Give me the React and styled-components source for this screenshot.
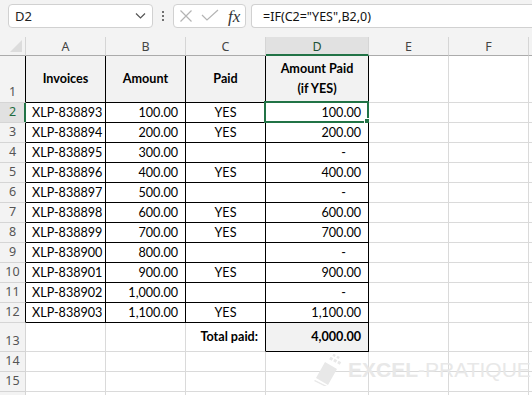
import React from "react";
import styled, { createGlobalStyle } from "styled-components";

const Global = createGlobalStyle`
  html, body { margin: 0; padding: 0; background: #ffffff; overflow: hidden; }
  #root { width: 532px; height: 395px; overflow: hidden; }
`;

const GREEN = "#217346";
const GRID = "#dadada";
const BLACK = "#000000";
const CELL_FONT = `"Lato", "Liberation Sans", sans-serif`;
const UI_FONT = `"Noto Sans", "Open Sans", sans-serif`;

const Page = styled.div`
  position: relative;
  width: 532px;
  height: 395px;
  overflow: hidden;
  background: #ffffff;
`;

const TopBar = styled.div`
  height: 37px;
  background: #f3f3f3;
  display: flex;
  align-items: flex-start;
  padding: 4px 0 0 8px;
  box-sizing: border-box;
`;

const Box = styled.div`
  height: 24px;
  box-sizing: border-box;
  background: #ffffff;
  border: 1px solid #d1d1d1;
  border-radius: 4px;
  display: flex;
  align-items: center;
`;

const NameBox = styled(Box)`
  width: 145px;
  padding: 0 5px 0 6px;
  justify-content: space-between;
  font-family: ${UI_FONT};
  font-size: 13px;
  color: #222;
`;

const Dots = styled.div`
  width: 20px;
  height: 24px;
  display: flex;
  flex-direction: column;
  align-items: center;
  justify-content: center;
  gap: 2px;
  span {
    width: 2px;
    height: 2px;
    background: #444;
    border-radius: 1px;
  }
`;

const FuncBox = styled(Box)`
  width: 73px;
  padding: 0 4px 0 5px;
  gap: 8px;
`;

const Fx = styled.span`
  font-family: "Liberation Serif", serif;
  font-style: italic;
  font-size: 17px;
  color: #333;
  margin-left: 1px;
  line-height: 1;
`;

const FormulaBox = styled(Box)`
  flex: 1;
  margin-left: 5px;
  border-right: none;
  border-radius: 4px 0 0 4px;
  padding-left: 11px;
  font-family: ${UI_FONT};
  font-size: 12.5px;
  color: #111;
  white-space: nowrap;
`;

const Sheet = styled.div`
  display: grid;
  grid-template-columns: 26px 80px 80px 80px 103px 80px 80px 1fr;
  grid-template-rows: 19px 47px repeat(11, 20px) 29px 20px 20px 20px;
`;

const Corner = styled.div`
  background: #f3f3f3;
  border-right: 1px solid #d5d5d5;
  border-bottom: 1px solid #ababab;
  position: relative;
  &::after {
    content: "";
    position: absolute;
    right: 3px;
    bottom: 3px;
    width: 0;
    height: 0;
    border-left: 12px solid transparent;
    border-bottom: 12px solid #dcdcdc;
  }
`;

const ColHead = styled.div`
  background: ${(p) => (p.$selected ? "#e1e1e1" : "#f3f3f3")};
  border-right: 1px solid #d5d5d5;
  border-bottom: ${(p) => (p.$selected ? `2px solid ${GREEN}` : "1px solid #ababab")};
  display: flex;
  align-items: center;
  justify-content: center;
  font-family: ${UI_FONT};
  font-size: 12.5px;
  color: ${(p) => (p.$selected ? "#1d5236" : "#444")};
  box-sizing: border-box;
  padding-top: 1px;
`;

const RowHead = styled.div`
  background: ${(p) => (p.$selected ? "#e1e1e1" : "#f3f3f3")};
  border-right: 1px solid ${(p) => p.$rb || "#d5d5d5"};
  box-shadow: ${(p) => (p.$selected ? `inset -1px 0 0 ${GREEN}` : "none")};
  border-bottom: 1px solid #d5d5d5;
  display: flex;
  align-items: flex-end;
  justify-content: center;
  font-family: ${UI_FONT};
  font-size: 12.5px;
  line-height: 18px;
  padding-bottom: 1px;
  box-sizing: border-box;
  color: ${(p) => (p.$selected ? "#1d6b40" : "#555")};
`;

const Cell = styled.div`
  position: relative;
  box-sizing: border-box;
  border-right: 1px solid ${(p) => p.$rb || GRID};
  border-bottom: 1px solid ${(p) => p.$bb || GRID};
  background: ${(p) => (p.$fill ? "#f2f2f2" : "#ffffff")};
  display: flex;
  align-items: center;
  justify-content: ${(p) =>
    p.$align === "right" ? "flex-end" : p.$align === "center" ? "center" : "flex-start"};
  text-align: ${(p) => p.$align || "left"};
  padding: ${(p) =>
    p.$align === "right" ? `0 ${p.$pr ?? 7}px 0 0` : p.$align === "center" ? "0" : "0 0 0 6px"};
  font-family: ${CELL_FONT};
  font-size: 12.6px;
  line-height: 20px;
  font-weight: ${(p) => (p.$bold ? 700 : 400)};
  color: #000;
  white-space: nowrap;
`;

const Selection = styled.div`
  position: absolute;
  left: -2px;
  top: -2px;
  right: -1px;
  bottom: -1px;
  border: 2px solid ${GREEN};
  pointer-events: none;
`;

const Handle = styled.div`
  position: absolute;
  right: -4px;
  bottom: -4px;
  width: 5px;
  height: 5px;
  background: ${GREEN};
  border: 1px solid #ffffff;
`;

const Watermark = styled.div`
  position: absolute;
  left: 313px;
  top: 354px;
  display: flex;
  align-items: center;
  gap: 3px;
  white-space: nowrap;
  font-family: "Liberation Sans", "Open Sans", sans-serif;
  font-size: 21px;
  color: #e8e8e8;
  letter-spacing: 0;
  pointer-events: none;
  b { font-weight: 700; }
  span { font-weight: 400; }
`;

const rows = [
  ["XLP-838893", "100.00", "YES", "100.00"],
  ["XLP-838894", "200.00", "YES", "200.00"],
  ["XLP-838895", "300.00", "", "-"],
  ["XLP-838896", "400.00", "YES", "400.00"],
  ["XLP-838897", "500.00", "", "-"],
  ["XLP-838898", "600.00", "YES", "600.00"],
  ["XLP-838899", "700.00", "YES", "700.00"],
  ["XLP-838900", "800.00", "", "-"],
  ["XLP-838901", "900.00", "YES", "900.00"],
  ["XLP-838902", "1,000.00", "", "-"],
  ["XLP-838903", "1,100.00", "YES", "1,100.00"],
];

const Chevron = () => (
  <svg width="12" height="8" viewBox="0 0 12 8">
    <polyline points="1,1.5 5.5,6 10,1.5" fill="none" stroke="#555" strokeWidth="1.2" />
  </svg>
);

const CrossIcon = () => (
  <svg width="14" height="14" viewBox="0 0 14 14">
    <path d="M1.5 1.5 L12.5 12.5 M12.5 1.5 L1.5 12.5" stroke="#b4b4b4" strokeWidth="1.2" fill="none" />
  </svg>
);

const CheckIcon = () => (
  <svg width="18" height="14" viewBox="0 0 18 14">
    <polyline points="1,6 6,11 17,1" fill="none" stroke="#b4b4b4" strokeWidth="1.2" />
  </svg>
);

const Logo = () => (
  <svg width="32" height="32" viewBox="0 0 32 32">
    <g fill="#e8e8e8">
      <polygon points="3,24 12,8 24,15 15,31" />
      <polygon points="2,26 14,32 13,33 1,27" />
      <rect x="17" y="3" width="3" height="3" transform="rotate(30 18 4)" />
      <rect x="21" y="5" width="3" height="3" transform="rotate(30 22 6)" />
      <rect x="25" y="7" width="3" height="3" transform="rotate(30 26 8)" />
      <rect x="20" y="0" width="2.5" height="2.5" transform="rotate(30 21 1)" />
      <rect x="24" y="2" width="2.5" height="2.5" transform="rotate(30 25 3)" />
    </g>
  </svg>
);

const cols = ["A", "B", "C", "D", "E", "F", ""];

export default function App() {
  return (
    <Page>
      <Global />
      <TopBar>
        <NameBox>
          <span>D2</span>
          <Chevron />
        </NameBox>
        <Dots>
          <span />
          <span />
          <span />
        </Dots>
        <FuncBox>
          <CrossIcon />
          <CheckIcon />
          <Fx>fx</Fx>
        </FuncBox>
        <FormulaBox>=IF(C2="YES",B2,0)</FormulaBox>
      </TopBar>

      <Sheet>
        <Corner />
        {cols.map((c, i) => (
          <ColHead key={i} $selected={c === "D"}>
            {c}
          </ColHead>
        ))}

        <RowHead $rb={BLACK}>1</RowHead>
        <Cell $fill $bold $align="center" $rb={BLACK} $bb={BLACK}>Invoices</Cell>
        <Cell $fill $bold $align="center" $rb={BLACK} $bb={BLACK}>Amount</Cell>
        <Cell $fill $bold $align="center" $rb={BLACK} $bb={BLACK}>Paid</Cell>
        <Cell $fill $bold $align="center" $rb={BLACK} $bb={BLACK}>
          Amount Paid
          <br />
          (if YES)
        </Cell>
        <Cell />
        <Cell />
        <Cell />

        {rows.map((r, i) => {
          const n = i + 2;
          const sel = n === 2;
          return (
            <React.Fragment key={n}>
              <RowHead $selected={sel} $rb={sel ? GREEN : BLACK}>
                {n}
              </RowHead>
              <Cell $rb={BLACK} $bb={BLACK}>{r[0]}</Cell>
              <Cell $align="right" $rb={BLACK} $bb={BLACK}>{r[1]}</Cell>
              <Cell $align="center" $rb={BLACK} $bb={BLACK}>{r[2]}</Cell>
              <Cell $align="right" $pr={r[3] === "-" ? 22 : 7} $rb={BLACK} $bb={BLACK}>
                {r[3]}
                {sel && (
                  <Selection>
                    <Handle />
                  </Selection>
                )}
              </Cell>
              <Cell />
              <Cell />
              <Cell />
            </React.Fragment>
          );
        })}

        <RowHead>13</RowHead>
        <Cell />
        <Cell />
        <Cell $align="right" $bold $rb={BLACK}>Total paid:</Cell>
        <Cell $align="right" $bold $fill $rb={BLACK} $bb={BLACK}>4,000.00</Cell>
        <Cell />
        <Cell />
        <Cell />

        {[14, 15, 16].map((n) => (
          <React.Fragment key={n}>
            <RowHead>{n < 16 ? n : ""}</RowHead>
            <Cell />
            <Cell />
            <Cell />
            <Cell />
            <Cell />
            <Cell />
            <Cell />
          </React.Fragment>
        ))}
      </Sheet>

      <Watermark>
        <Logo />
        <div>
          <b>EXCEL</b>
          <span>-PRATIQUE</span>
        </div>
      </Watermark>
    </Page>
  );
}
